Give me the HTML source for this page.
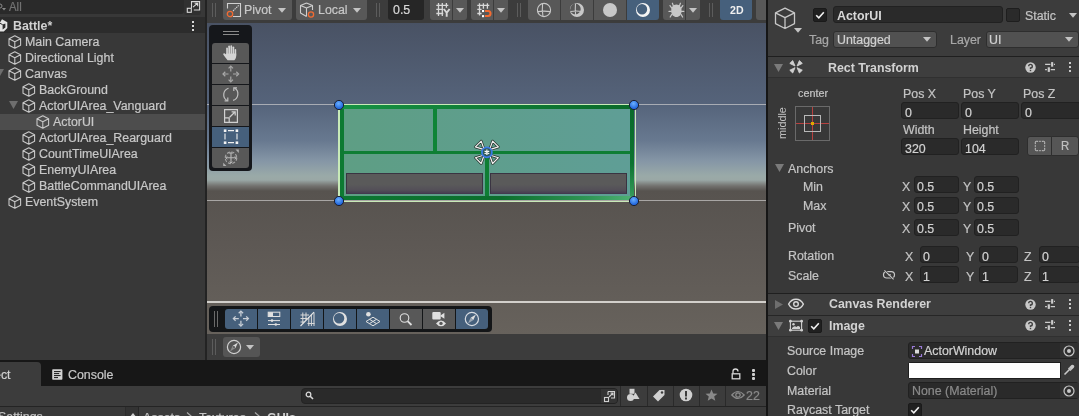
<!DOCTYPE html>
<html><head><meta charset="utf-8">
<style>
*{margin:0;padding:0;box-sizing:border-box}
html,body{width:1079px;height:416px;overflow:hidden;background:#383838}
body{position:relative;font-family:"Liberation Sans",sans-serif;font-size:12.4px;color:#c4c4c4}
.a{position:absolute}
.t{position:absolute;white-space:nowrap;line-height:16px;font-size:12.4px;will-change:transform;transform:scaleY(1.05);transform-origin:0 12.3px;-webkit-text-stroke:0.2px currentColor}
.b{font-weight:bold;-webkit-text-stroke:0}
svg{position:absolute;overflow:visible}
</style></head><body>
<!-- ========== HIERARCHY ========== -->
<div class="a" style="left:0;top:0;width:205px;height:360px;background:#383838"></div>
<div class="a" style="left:0;top:0;width:184px;height:14px;background:#2a2a2a;border-radius:0 0 3px 0"></div>
<div class="a" style="left:184px;top:0;width:17px;height:15px;background:#303030;border-radius:0 0 3px 3px"></div>
<div class="a" style="left:0;top:17px;width:205px;height:16px;background:#2c2c2c"></div>
<div class="a" style="left:0;top:114px;width:205px;height:16px;background:#4d4d4d"></div>

<!-- search row -->
<svg style="left:0px;top:3px" width="8" height="8" viewBox="0 0 8 8"><path d="M2 5h4L4 7.5Z" fill="#8a8a8a"/><circle cx="0" cy="3" r="2" fill="none" stroke="#8a8a8a"/></svg>
<div class="t" style="left:9.2px;top:-1.2px;color:#747474;font-size:11.4px">All</div>
<svg style="left:184px;top:0px" width="18" height="15" viewBox="184 0 18 15"><path d="M191.5 8V1.6H199.6V10H193.8" fill="none" stroke="#d8d8d8" stroke-width="1.1"/><rect x="187.3" y="8.3" width="4" height="4" fill="none" stroke="#d8d8d8" stroke-width="1.1"/><path d="M193 7.2L197.6 3.2 M194.6 3.2H197.7V6.3" fill="none" stroke="#d8d8d8" stroke-width="1.1"/></svg>
<!-- header -->
<svg style="left:0px;top:17px" width="10" height="17" viewBox="0 17 10 17"><path d="M0 22.6L2 19.2L7.3 22.3V28L3.8 31.6H0Z" fill="#e4e4e4"/><path d="M2.6 24.6L5.4 23.6V27.6L2.6 29.4Z" fill="#2c2c2c"/><path d="M2.6 24.6L0 23.3" stroke="#2c2c2c" stroke-width="1"/></svg>
<div class="t b" style="left:12.5px;top:17.7px;color:#d2d2d2">Battle*</div>
<div class="a" style="left:192px;top:21px;width:2px;height:2px;background:#d8d8d8"></div>
<div class="a" style="left:192px;top:25px;width:2px;height:2px;background:#d8d8d8"></div>
<div class="a" style="left:192px;top:29px;width:2px;height:2px;background:#d8d8d8"></div>
<svg style="left:7.6px;top:35.3px" width="14" height="14" viewBox="0 0 14 14"><path d="M6.8 .8L12.6 3.8V10.2L6.8 13.2L1 10.2V3.8Z M1 3.8L6.8 6.8L12.6 3.8 M6.8 6.8V13.2" fill="none" stroke="#c8c8c8" stroke-width="1.1" stroke-linejoin="round"/></svg>
<div class="t" style="left:25.0px;top:33.8px;color:#c8c8c8">Main Camera</div>
<svg style="left:7.6px;top:51.3px" width="14" height="14" viewBox="0 0 14 14"><path d="M6.8 .8L12.6 3.8V10.2L6.8 13.2L1 10.2V3.8Z M1 3.8L6.8 6.8L12.6 3.8 M6.8 6.8V13.2" fill="none" stroke="#c8c8c8" stroke-width="1.1" stroke-linejoin="round"/></svg>
<div class="t" style="left:25.0px;top:49.8px;color:#c8c8c8">Directional Light</div>
<svg style="left:7.6px;top:67.3px" width="14" height="14" viewBox="0 0 14 14"><path d="M6.8 .8L12.6 3.8V10.2L6.8 13.2L1 10.2V3.8Z M1 3.8L6.8 6.8L12.6 3.8 M6.8 6.8V13.2" fill="none" stroke="#c8c8c8" stroke-width="1.1" stroke-linejoin="round"/></svg>
<div class="t" style="left:25.0px;top:65.8px;color:#c8c8c8">Canvas</div>
<svg style="left:-5px;top:69px" width="9" height="8" viewBox="0 0 9 8"><path d="M0 0H9L4.5 8Z" fill="#6e6e6e"/></svg>
<svg style="left:21.6px;top:83.3px" width="14" height="14" viewBox="0 0 14 14"><path d="M6.8 .8L12.6 3.8V10.2L6.8 13.2L1 10.2V3.8Z M1 3.8L6.8 6.8L12.6 3.8 M6.8 6.8V13.2" fill="none" stroke="#c8c8c8" stroke-width="1.1" stroke-linejoin="round"/></svg>
<div class="t" style="left:39.0px;top:81.8px;color:#c8c8c8">BackGround</div>
<svg style="left:21.6px;top:99.3px" width="14" height="14" viewBox="0 0 14 14"><path d="M6.8 .8L12.6 3.8V10.2L6.8 13.2L1 10.2V3.8Z M1 3.8L6.8 6.8L12.6 3.8 M6.8 6.8V13.2" fill="none" stroke="#c8c8c8" stroke-width="1.1" stroke-linejoin="round"/></svg>
<div class="t" style="left:39.0px;top:97.8px;color:#c8c8c8">ActorUIArea_Vanguard</div>
<svg style="left:9px;top:101px" width="9" height="8" viewBox="0 0 9 8"><path d="M0 0H9L4.5 8Z" fill="#6e6e6e"/></svg>
<svg style="left:35.6px;top:115.3px" width="14" height="14" viewBox="0 0 14 14"><path d="M6.8 .8L12.6 3.8V10.2L6.8 13.2L1 10.2V3.8Z M1 3.8L6.8 6.8L12.6 3.8 M6.8 6.8V13.2" fill="none" stroke="#c8c8c8" stroke-width="1.1" stroke-linejoin="round"/></svg>
<div class="t" style="left:53.0px;top:113.8px;color:#c8c8c8">ActorUI</div>
<svg style="left:21.6px;top:131.3px" width="14" height="14" viewBox="0 0 14 14"><path d="M6.8 .8L12.6 3.8V10.2L6.8 13.2L1 10.2V3.8Z M1 3.8L6.8 6.8L12.6 3.8 M6.8 6.8V13.2" fill="none" stroke="#c8c8c8" stroke-width="1.1" stroke-linejoin="round"/></svg>
<div class="t" style="left:39.0px;top:129.8px;color:#c8c8c8">ActorUIArea_Rearguard</div>
<svg style="left:21.6px;top:147.3px" width="14" height="14" viewBox="0 0 14 14"><path d="M6.8 .8L12.6 3.8V10.2L6.8 13.2L1 10.2V3.8Z M1 3.8L6.8 6.8L12.6 3.8 M6.8 6.8V13.2" fill="none" stroke="#c8c8c8" stroke-width="1.1" stroke-linejoin="round"/></svg>
<div class="t" style="left:39.0px;top:145.8px;color:#c8c8c8">CountTimeUIArea</div>
<svg style="left:21.6px;top:163.3px" width="14" height="14" viewBox="0 0 14 14"><path d="M6.8 .8L12.6 3.8V10.2L6.8 13.2L1 10.2V3.8Z M1 3.8L6.8 6.8L12.6 3.8 M6.8 6.8V13.2" fill="none" stroke="#c8c8c8" stroke-width="1.1" stroke-linejoin="round"/></svg>
<div class="t" style="left:39.0px;top:161.8px;color:#c8c8c8">EnemyUIArea</div>
<svg style="left:21.6px;top:179.3px" width="14" height="14" viewBox="0 0 14 14"><path d="M6.8 .8L12.6 3.8V10.2L6.8 13.2L1 10.2V3.8Z M1 3.8L6.8 6.8L12.6 3.8 M6.8 6.8V13.2" fill="none" stroke="#c8c8c8" stroke-width="1.1" stroke-linejoin="round"/></svg>
<div class="t" style="left:39.0px;top:177.8px;color:#c8c8c8">BattleCommandUIArea</div>
<svg style="left:7.6px;top:195.3px" width="14" height="14" viewBox="0 0 14 14"><path d="M6.8 .8L12.6 3.8V10.2L6.8 13.2L1 10.2V3.8Z M1 3.8L6.8 6.8L12.6 3.8 M6.8 6.8V13.2" fill="none" stroke="#c8c8c8" stroke-width="1.1" stroke-linejoin="round"/></svg>
<div class="t" style="left:25.0px;top:193.8px;color:#c8c8c8">EventSystem</div>
<!-- divider -->
<div class="a" style="left:205px;top:0;width:2px;height:360px;background:#232323"></div>

<!-- ========== SCENE TOOLBAR ========== -->
<div class="a" style="left:207px;top:0;width:559px;height:23px;background:#3c3c3c"></div>
<div class="a" style="left:212px;top:3px;width:1px;height:14px;background:#5c5c5c"></div><div class="a" style="left:215px;top:3px;width:1px;height:14px;background:#5c5c5c"></div>
<div class="a" style="left:223px;top:0;width:69px;height:20px;background:#585858;border-radius:0 0 3px 3px"></div>
<svg style="left:226px;top:2px" width="16" height="16" viewBox="0 0 16 16"><path d="M1.5 6.5V1.5H14.5V14.5H7" fill="none" stroke="#d0d0d0" stroke-width="1.1"/><path d="M7 9L13 3" stroke="#d0d0d0" stroke-width="1.1" stroke-dasharray="1.5 .7"/><circle cx="4" cy="12" r="2.7" fill="none" stroke="#f26b32" stroke-width="1.3"/></svg>
<div class="t" style="left:244.2px;top:2.3px;color:#c8c8c8">Pivot</div>
<svg style="left:278px;top:8px" width="8" height="5" viewBox="0 0 8 5"><path d="M0 0H8L4 4.8Z" fill="#c4c4c4"/></svg>
<div class="a" style="left:296px;top:0;width:71px;height:20px;background:#585858;border-radius:0 0 3px 3px"></div>
<svg style="left:299px;top:2px" width="17" height="16" viewBox="0 0 17 16"><path d="M7.5 1L13.5 3.5V8 M7.5 1L1.5 3.5V11L7.5 14.5 M1.5 3.5L7.5 6V14.5 M7.5 6L13.5 3.5" fill="none" stroke="#cfcfcf" stroke-width="1.1" stroke-linejoin="round"/><circle cx="12" cy="12.5" r="2.6" fill="#585858" stroke="#f26b32" stroke-width="1.3"/></svg>
<div class="t" style="left:317.5px;top:2.3px;color:#c8c8c8">Local</div>
<svg style="left:353px;top:8px" width="8" height="5" viewBox="0 0 8 5"><path d="M0 0H8L4 4.8Z" fill="#c4c4c4"/></svg>
<div class="a" style="left:376px;top:3px;width:1px;height:14px;background:#5c5c5c"></div><div class="a" style="left:379px;top:3px;width:1px;height:14px;background:#5c5c5c"></div>
<div class="a" style="left:388px;top:0;width:36px;height:20px;background:#262626;border-radius:0 0 3px 3px"></div>
<div class="t" style="left:393px;top:2px;color:#d8d8d8">0.5</div>
<div class="a" style="left:430px;top:0;width:22px;height:20px;background:#585858;border-radius:0 0 0 3px"></div>
<div class="a" style="left:453px;top:0;width:14px;height:20px;background:#585858;border-radius:0 0 3px 0"></div>
<svg style="left:432px;top:0px" width="24" height="20" viewBox="432 0 24 20"><path d="M438.5 3V16 M442.3 3V16 M446.4 3V7.8 M436.3 5.3H448.3 M436.3 9.4H443.3 M436.3 13.5H443.3" stroke="#d8d8d8" stroke-width="1.3"/><path d="M443.8 9L446.7 12.8L449.6 9 M446.7 12.8V16.8" fill="none" stroke="#d8d8d8" stroke-width="1.9"/></svg>
<svg style="left:456px;top:8px" width="8" height="5" viewBox="0 0 8 5"><path d="M0 0H8L4 4.8Z" fill="#c4c4c4"/></svg>
<div class="a" style="left:471px;top:0;width:22px;height:20px;background:#585858;border-radius:0 0 0 3px"></div>
<div class="a" style="left:494px;top:0;width:14px;height:20px;background:#585858;border-radius:0 0 3px 0"></div>
<svg style="left:472px;top:0px" width="24" height="20" viewBox="472 0 24 20"><path d="M479.5 3.2V15.5 M483.4 3.2V8.8 M487.4 3.2V8.8 M477.3 5.3H489.3 M477.3 9.4H481.6 M477.3 13.5H481.6" stroke="#d8d8d8" stroke-width="1.3"/><rect x="482" y="10" width="2.1" height="2.1" fill="#fff"/><rect x="482" y="15.1" width="2.1" height="2.1" fill="#fff"/><path d="M485 11H488A2.5 2.5 0 0 1 488 16H485" fill="none" stroke="#f26b32" stroke-width="2.1"/></svg>
<svg style="left:497px;top:8px" width="8" height="5" viewBox="0 0 8 5"><path d="M0 0H8L4 4.8Z" fill="#c4c4c4"/></svg>
<div class="a" style="left:517px;top:3px;width:1px;height:14px;background:#5c5c5c"></div><div class="a" style="left:520px;top:3px;width:1px;height:14px;background:#5c5c5c"></div>
<div class="a" style="left:528px;top:0;width:32px;height:20px;background:#585858;border-radius:0 0 0 3px"></div>
<div class="a" style="left:561px;top:0;width:32px;height:20px;background:#585858;border-radius:0"></div>
<div class="a" style="left:594px;top:0;width:32px;height:20px;background:#585858;border-radius:0"></div>
<div class="a" style="left:627px;top:0;width:32px;height:20px;background:#46607c;border-radius:0 0 3px 0"></div>
<svg style="left:536px;top:2px" width="16" height="16" viewBox="0 0 16 16"><circle cx="8" cy="8" r="6.6" fill="none" stroke="#c8c8c8" stroke-width="1.1"/><path d="M1.6 9.6Q8 8.6 14.4 9.6 M6.6 1.5Q5.8 8 7 14.6" fill="none" stroke="#c8c8c8" stroke-width="1.1"/></svg>
<svg style="left:569px;top:2px" width="16" height="16" viewBox="0 0 16 16"><path d="M8 1A7 7 0 1 1 8 15A7 7 0 1 1 8 1Z M6.3 1.6A5.4 5.4 0 1 0 6.3 12.4A5.4 5.4 0 1 0 6.3 1.6Z" fill="#c8c8c8" fill-rule="evenodd"/><path d="M1.5 9.5Q7 8.6 13 9.5 M6.5 1.5Q6 7 6.6 13" fill="none" stroke="#c8c8c8" stroke-width="1.1"/></svg>
<svg style="left:602px;top:2px" width="16" height="16" viewBox="0 0 16 16"><circle cx="8" cy="8" r="7" fill="#c8c8c8"/></svg>
<svg style="left:635px;top:2px" width="16" height="16" viewBox="0 0 16 16"><path d="M8 1A7 7 0 1 1 8 15A7 7 0 1 1 8 1Z M7 2.1A5.2 5.2 0 1 0 7 12.5A5.2 5.2 0 1 0 7 2.1Z" fill="#f4f4f4" fill-rule="evenodd"/></svg>
<div class="a" style="left:663px;top:0;width:22px;height:20px;background:#585858;border-radius:0 0 0 3px"></div>
<div class="a" style="left:686px;top:0;width:14px;height:20px;background:#585858;border-radius:0 0 3px 0"></div>
<svg style="left:664px;top:0px" width="24" height="20" viewBox="664 0 24 20"><path d="M676.4 4.6C679.8 4.6 681.6 7.5 681.6 11C681.6 14.8 679.3 17 676.4 17C673.5 17 671.2 14.8 671.2 11C671.2 7.5 673 4.6 676.4 4.6Z" fill="#c8c8c8"/><path d="M673.4 6L672.4 3.2 M679.4 6L680.4 3.2 M671.8 8.2L670 5.6 M681 8.2L682.8 5.6 M671.2 11.4H669 M681.6 11.4H683.8 M671.6 14.6L670.2 17 M681.2 14.6L682.6 17" stroke="#c8c8c8" stroke-width="1.2" stroke-linecap="round"/></svg>
<svg style="left:689px;top:8px" width="8" height="5" viewBox="0 0 8 5"><path d="M0 0H8L4 4.8Z" fill="#c4c4c4"/></svg>
<div class="a" style="left:709px;top:3px;width:1px;height:14px;background:#5c5c5c"></div><div class="a" style="left:712px;top:3px;width:1px;height:14px;background:#5c5c5c"></div>
<div class="a" style="left:720px;top:0;width:32px;height:20px;background:#46607c;border-radius:0 0 3px 3px"></div>
<div class="t b" style="left:730px;top:2.3px;color:#f0f0f0;font-size:10.6px">2D</div>
<div class="a" style="left:756px;top:0;width:12px;height:20px;background:#585858;border-radius:0 0 0 3px"></div>
<!-- ========== SCENE VIEW ========== -->
<div class="a" style="left:207px;top:23px;width:559px;height:311px;background:linear-gradient(to bottom,#495264 0px,#55637a 80px,#687990 118px,#8596a6 138px,#9aaaa8 153px,#9aa8a6 157px,#72716e 163px,#57534f 168px,#5d5854 220px,#67625c 311px)"></div>
<!-- scene bottom toolbar -->
<div class="a" style="left:207px;top:334px;width:559px;height:26px;background:#3c3c3c"></div>
<div class="a" style="left:766px;top:0;width:2px;height:416px;background:#161616"></div>

<div class="a" style="left:207px;top:104px;width:559px;height:1px;background:#a8acb4"></div>
<div class="a" style="left:207px;top:200px;width:559px;height:1px;background:#a8a6a4"></div>
<div class="a" style="left:207px;top:301px;width:559px;height:2px;background:#d2cfcb"></div>
<div class="a" style="left:209px;top:25px;width:43px;height:146px;background:#15171b;border-radius:4px"></div>
<div class="a" style="left:223px;top:31px;width:16px;height:1px;background:#8a8a8a"></div><div class="a" style="left:223px;top:34px;width:16px;height:1px;background:#8a8a8a"></div>
<div class="a" style="left:212px;top:43px;width:37px;height:20px;background:#585858;border-radius:3px 3px 0 0"></div>
<div class="a" style="left:212px;top:64px;width:37px;height:20px;background:#585858;border-radius:0"></div>
<div class="a" style="left:212px;top:85px;width:37px;height:20px;background:#585858;border-radius:0"></div>
<div class="a" style="left:212px;top:106px;width:37px;height:20px;background:#585858;border-radius:0"></div>
<div class="a" style="left:212px;top:127px;width:37px;height:20px;background:#46607c;border-radius:0"></div>
<div class="a" style="left:212px;top:148px;width:37px;height:20px;background:#585858;border-radius:0 0 3px 3px"></div>
<svg style="left:212px;top:43px" width="37" height="22" viewBox="212 43 37 22"><g fill="#d4d4d4"><rect x="226.2" y="47.6" width="1.7" height="8" rx=".85"/><rect x="228.3" y="45.4" width="1.7" height="9" rx=".85"/><rect x="230.4" y="45.2" width="1.7" height="9" rx=".85"/><rect x="232.5" y="46.4" width="1.7" height="9" rx=".85"/><rect x="234.6" y="49" width="1.6" height="7" rx=".8"/><path d="M226.2 53.5H236.2V56C236.2 58 235.3 59.3 234.3 60.3H227.6C226.4 59 224.8 56.8 223.4 54.8C222.8 53.9 223.6 52.6 224.8 53.4L226.2 54.6Z"/></g></svg>
<svg style="left:212px;top:64px" width="37" height="22" viewBox="212 64 37 22"><path d="M230.8 67V71.5 M230.8 76.5V81 M224 74H228.5 M233 74H237.5" stroke="#a8a8a8" stroke-width="1.2"/><path d="M228.6 68.3L230.8 66L233 68.3 M228.6 79.7L230.8 82L233 79.7 M225.3 71.8L223 74L225.3 76.2 M236.3 71.8L238.6 74L236.3 76.2" fill="none" stroke="#a8a8a8" stroke-width="1.2"/></svg>
<svg style="left:212px;top:85px" width="37" height="22" viewBox="212 85 37 22"><path d="M228.5 88.2A6.8 6.8 0 0 0 227 100.5 M233.1 100.4A6.8 6.8 0 0 0 234.6 88.1" fill="none" stroke="#c0c0c0" stroke-width="1.2"/><path d="M224.6 100.8H227.8V97.6 M237 87.8H233.8V91" fill="none" stroke="#c0c0c0" stroke-width="1.2"/></svg>
<svg style="left:212px;top:106px" width="37" height="22" viewBox="212 106 37 22"><path d="M224.6 109.6H237.4V122.4H224.6Z M224.6 117.8H229.2V122.4" fill="none" stroke="#d0d0d0" stroke-width="1.2"/><path d="M229.6 117.2L235.2 111.8 M231.6 111.8H235.2V115.4" fill="none" stroke="#d0d0d0" stroke-width="1.2"/></svg>
<svg style="left:212px;top:127px" width="37" height="22" viewBox="212 127 37 22"><path d="M226 130.6H236 M226 142.6H236 M225 131.6V141.6 M237 131.6V141.6" stroke="#f0f0f0" stroke-width="1.1" stroke-dasharray="0 2 6 2"/><rect x="223.8" y="129.4" width="2.6" height="2.6" fill="#f4f4f4"/><rect x="235.6" y="129.4" width="2.6" height="2.6" fill="#f4f4f4"/><rect x="223.8" y="141.4" width="2.6" height="2.6" fill="#f4f4f4"/><rect x="235.6" y="141.4" width="2.6" height="2.6" fill="#f4f4f4"/></svg>
<svg style="left:212px;top:148px" width="37" height="22" viewBox="212 148 37 22"><circle cx="231" cy="157.8" r="5.8" fill="none" stroke="#a8a8a8" stroke-width="1.1" stroke-dasharray="3 1.5"/><path d="M231 152.5V163 M225.7 157.8H236.3" stroke="#b8b8b8" stroke-width="1.1"/><path d="M229.5 154L231 152.5L232.5 154 M229.5 161.6L231 163.1L232.5 161.6 M227.2 156.3L225.7 157.8L227.2 159.3 M234.8 156.3L236.3 157.8L234.8 159.3" fill="none" stroke="#b8b8b8" stroke-width="1"/><path d="M223.2 166H226.5L223.2 162.7Z M238.8 149.6H235.5L238.8 152.9Z" fill="#b0b0b0"/></svg>
<div class="a" style="left:338px;top:104px;width:297.5px;height:97.5px;border:1px solid #c8eab8;border-width:1px 1.5px 1.5px 2px"></div>
<div class="a" style="left:340px;top:105px;width:294px;height:4px;background:linear-gradient(90deg,#179344,#0f7d36 50%,#0a6a2a)"></div><div class="a" style="left:340px;top:109px;width:4px;height:91px;background:#0d7a32"></div><div class="a" style="left:630px;top:109px;width:4px;height:91px;background:linear-gradient(180deg,#0a6a2a,#0c7330 60%,#3a9e5e)"></div><div class="a" style="left:344px;top:196px;width:286px;height:4px;background:linear-gradient(90deg,#0c7632,#0b6e2d 55%,#2f9555 85%,#4caf72)"></div><div class="a" style="left:630px;top:196px;width:4px;height:4px;background:#4caf72"></div>
<div class="a" style="left:344px;top:109px;width:286px;height:87px;background:linear-gradient(90deg,#5e9e84,#5f9e96)"></div>
<div class="a" style="left:433px;top:109px;width:4px;height:42px;background:#0e8436"></div>
<div class="a" style="left:344px;top:150.5px;width:286px;height:3.5px;background:#0e7e34"></div>
<div class="a" style="left:485px;top:152px;width:3.5px;height:44px;background:#0e7e34"></div>
<div class="a" style="left:346px;top:173px;width:137px;height:21px;background:linear-gradient(180deg,#5a5a5a 55%,#534f58 85%,#473f52);border:1px solid #3a3442;border-bottom-color:#43394f"></div>
<div class="a" style="left:490px;top:173px;width:137px;height:21px;background:linear-gradient(180deg,#5a5a5a 55%,#534f58 85%,#473f52);border:1px solid #3a3442;border-bottom-color:#43394f"></div>
<svg style="left:333px;top:98.5px" width="12" height="12" viewBox="0 0 12 12"><defs><radialGradient id="hg" cx=".45" cy=".35" r=".6"><stop offset="0" stop-color="#6ab0ff"/><stop offset="1" stop-color="#1a5ed8"/></radialGradient></defs><circle cx="6" cy="6" r="4.6" fill="url(#hg)" stroke="#1a2030" stroke-width="1"/></svg>
<svg style="left:628px;top:98.5px" width="12" height="12" viewBox="0 0 12 12"><defs><radialGradient id="hg" cx=".45" cy=".35" r=".6"><stop offset="0" stop-color="#6ab0ff"/><stop offset="1" stop-color="#1a5ed8"/></radialGradient></defs><circle cx="6" cy="6" r="4.6" fill="url(#hg)" stroke="#1a2030" stroke-width="1"/></svg>
<svg style="left:333px;top:195px" width="12" height="12" viewBox="0 0 12 12"><defs><radialGradient id="hg" cx=".45" cy=".35" r=".6"><stop offset="0" stop-color="#6ab0ff"/><stop offset="1" stop-color="#1a5ed8"/></radialGradient></defs><circle cx="6" cy="6" r="4.6" fill="url(#hg)" stroke="#1a2030" stroke-width="1"/></svg>
<svg style="left:628px;top:195px" width="12" height="12" viewBox="0 0 12 12"><defs><radialGradient id="hg" cx=".45" cy=".35" r=".6"><stop offset="0" stop-color="#6ab0ff"/><stop offset="1" stop-color="#1a5ed8"/></radialGradient></defs><circle cx="6" cy="6" r="4.6" fill="url(#hg)" stroke="#1a2030" stroke-width="1"/></svg>
<svg style="left:470px;top:135px" width="34" height="34" viewBox="470 135 34 34"><path d="M481.2 141.1L475.4 146.9L484.2 149.6Z M492.6 141.1L498.4 146.9L489.6 149.6Z M475.4 157.7L481.2 163.5L484.2 155Z M498.4 157.7L492.6 163.5L489.6 155Z" fill="none" stroke="#26302a" stroke-width="2.6" stroke-linejoin="round"/><path d="M481.2 141.1L475.4 146.9L484.2 149.6Z M492.6 141.1L498.4 146.9L489.6 149.6Z M475.4 157.7L481.2 163.5L484.2 155Z M498.4 157.7L492.6 163.5L489.6 155Z" fill="none" stroke="#f4f4f4" stroke-width="1.2" stroke-linejoin="round"/><circle cx="486.9" cy="152.3" r="5" fill="#2f5a5a" stroke="#3b7be6" stroke-width="1.8"/><path d="M486.9 149.6V155 M484.6 150.9L489.2 153.7 M484.6 153.7L489.2 150.9" stroke="#ffffff" stroke-width="1.2"/></svg>
<div class="a" style="left:209px;top:306px;width:283px;height:26px;background:#141618;border-radius:4px"></div>
<div class="a" style="left:214px;top:311px;width:1px;height:16px;background:#6a6a6a"></div><div class="a" style="left:217px;top:311px;width:1px;height:16px;background:#6a6a6a"></div>
<div class="a" style="left:225px;top:309px;width:32px;height:20px;background:#46607c;border-radius:3px 0 0 3px"></div>
<div class="a" style="left:258px;top:309px;width:32px;height:20px;background:#46607c;border-radius:0"></div>
<div class="a" style="left:291px;top:309px;width:32px;height:20px;background:#46607c;border-radius:0"></div>
<div class="a" style="left:324px;top:309px;width:32px;height:20px;background:#46607c;border-radius:0"></div>
<div class="a" style="left:357px;top:309px;width:32px;height:20px;background:#46607c;border-radius:0"></div>
<div class="a" style="left:390px;top:309px;width:32px;height:20px;background:#585858;border-radius:0"></div>
<div class="a" style="left:423px;top:309px;width:32px;height:20px;background:#585858;border-radius:0"></div>
<div class="a" style="left:456px;top:309px;width:32px;height:20px;background:#46607c;border-radius:0 3px 3px 0"></div>
<svg style="left:225px;top:306px" width="270" height="26" viewBox="225 306 270 26"><path d="M240.9 311.5V316.5 M240.9 320.7V325.7 M233.8 318.6H238.8 M243 318.6H248" stroke="#c8ced6" stroke-width="1.3"/><path d="M238.7 313.3L240.9 311.1L243.1 313.3 M238.7 323.9L240.9 326.1L243.1 323.9 M235.6 316.4L233.4 318.6L235.6 320.8 M246.2 316.4L248.4 318.6L246.2 320.8" fill="none" stroke="#c8ced6" stroke-width="1.3"/><rect x="268.2" y="312.2" width="11.6" height="4.3" fill="none" stroke="#e0e0e0" stroke-width="1"/><rect x="268.2" y="312.2" width="4.8" height="4.3" fill="#e0e0e0"/><path d="M268 320.6H280 M268 324.5H280" stroke="#e0e0e0" stroke-width="1"/><circle cx="272" cy="320.6" r="1.3" fill="#e0e0e0"/><circle cx="275.8" cy="324.5" r="1.3" fill="#e0e0e0"/><path d="M302.8 312.5V323 M306 312.5V320 M300.5 315H309 M300.5 318.5H307 M300.5 322H304 M308.8 317V326 M311.4 314.5V326 M314 312.5V326 M307.5 323.5H314.5" stroke="#d8d8d8" stroke-width="1"/><path d="M300.5 326L314 312.2" stroke="#e8e8e8" stroke-width="1.1"/><path d="M340 312A7 7 0 1 1 340 326A7 7 0 1 1 340 312Z M339.1 313.1A5.2 5.2 0 1 0 339.1 323.5A5.2 5.2 0 1 0 339.1 313.1Z" fill="#e0e0e0" fill-rule="evenodd"/><circle cx="368.4" cy="314.3" r="2.3" fill="#e0e0e0"/><path d="M373 317.2L380 321.5L373 325.8L366 321.5Z M369.5 319.3L376.5 323.6 M376.5 319.3L369.5 323.6" fill="none" stroke="#e0e0e0" stroke-width="1"/><circle cx="404.5" cy="318" r="4.3" fill="none" stroke="#e0e0e0" stroke-width="1.1"/><path d="M407.6 321.2L411.5 325" stroke="#e0e0e0" stroke-width="1.8"/><rect x="432.3" y="312" width="8.4" height="7.5" rx="1" fill="#e0e0e0"/><path d="M440.5 315.5L444.4 312.8V318.8L440.5 316.2Z" fill="#e0e0e0"/><path d="M436 323.4Q441 317.5 446 323.4Q441 329.3 436 323.4Z" fill="#e0e0e0"/><circle cx="441" cy="323.4" r="1.7" fill="#585858"/><circle cx="471.9" cy="319" r="6.6" fill="none" stroke="#d8dce2" stroke-width="1.2"/><path d="M475.9 314.6L473.2 320.2L470.7 317.8Z" fill="#e0e0e0"/><path d="M467.9 323.4L470.6 317.8L473.1 320.2Z" fill="#9aa6b4"/></svg>







<div class="a" style="left:212px;top:339px;width:1px;height:16px;background:#5c5c5c"></div><div class="a" style="left:215px;top:339px;width:1px;height:16px;background:#5c5c5c"></div>
<div class="a" style="left:223px;top:337px;width:37px;height:20px;background:#555555;border-radius:3px"></div>
<svg style="left:226px;top:339px" width="16" height="16" viewBox="0 0 16 16"><circle cx="8" cy="8" r="6.6" fill="none" stroke="#d0d0d0" stroke-width="1.2"/><path d="M12 3.6L9.3 9.2L6.8 6.8Z" fill="#d8d8d8"/><path d="M4 12.4L6.7 6.8L9.2 9.2Z" fill="#8a8a8a"/><circle cx="8" cy="8" r=".9" fill="#545454"/></svg>
<svg style="left:246px;top:345px" width="8" height="5" viewBox="0 0 8 5"><path d="M0 0H8L4 4.8Z" fill="#c4c4c4"/></svg>
<!-- ========== BOTTOM (Project) ========== -->
<div class="a" style="left:0;top:360px;width:766px;height:26px;background:#171717"></div>
<div class="a" style="left:0;top:362px;width:41px;height:24px;background:#3c3c3c;border-radius:0 4px 0 0"></div>
<div class="a" style="left:0;top:386px;width:766px;height:20px;background:#3c3c3c"></div>
<div class="a" style="left:0;top:405.5px;width:766px;height:1.5px;background:#242424"></div>
<div class="a" style="left:0;top:407px;width:766px;height:9px;background:#3b3b3b"></div>

<div class="t" style="left:-5.6px;top:366.5px;color:#d2d2d2">ect</div>
<svg style="left:52px;top:369px" width="11" height="11" viewBox="0 0 11 11"><rect x=".2" y=".2" width="10.2" height="10.6" rx=".8" fill="#d4d4d4"/><path d="M2 2.6H8.6 M2 4.6H7.2 M2 6.6H8.6 M2 8.6H6" stroke="#171717" stroke-width="1"/></svg>
<div class="t" style="left:67.5px;top:366.5px;color:#c8c8c8">Console</div>
<svg style="left:731px;top:368px" width="10" height="12" viewBox="0 0 10 12"><path d="M2 5.5V3.5A2.5 2.5 0 0 1 7 3.5" fill="none" stroke="#d8d8d8" stroke-width="1.3"/><rect x="1.2" y="5.8" width="7.6" height="5" fill="none" stroke="#d8d8d8" stroke-width="1.3"/></svg>
<div class="a" style="left:752px;top:369.0px;width:2.5px;height:2.5px;background:#d0d0d0;border-radius:1px"></div>
<div class="a" style="left:752px;top:373.2px;width:2.5px;height:2.5px;background:#d0d0d0;border-radius:1px"></div>
<div class="a" style="left:752px;top:377.4px;width:2.5px;height:2.5px;background:#d0d0d0;border-radius:1px"></div>
<div class="a" style="left:301px;top:388px;width:317px;height:16px;background:#2a2a2a;border:1px solid #232323;border-radius:4px"></div>
<div class="a" style="left:601px;top:389px;width:16px;height:14px;background:#343434;border-radius:0 3px 3px 0"></div>
<svg style="left:305px;top:391px" width="9" height="9" viewBox="0 0 9 9"><circle cx="3.5" cy="3.5" r="2.3" fill="none" stroke="#d8d8d8" stroke-width="1.3"/><path d="M5.2 5.2L8 8" stroke="#d8d8d8" stroke-width="1.6"/></svg>
<svg style="left:603px;top:390px" width="13" height="13" viewBox="0 0 13 13"><path d="M5 1.5H11.5V8H8 M5 1.5V5" fill="none" stroke="#d0d0d0" stroke-width="1.1"/><rect x="1.5" y="7.5" width="4" height="4" fill="none" stroke="#d0d0d0" stroke-width="1.1"/><path d="M6 7L10 3 M7.5 3H10V5.5" fill="none" stroke="#d0d0d0" stroke-width="1.1"/></svg>
<div class="a" style="left:620px;top:386px;width:1px;height:20px;background:#2a2a2a"></div>
<div class="a" style="left:646.5px;top:386px;width:1px;height:20px;background:#2a2a2a"></div>
<div class="a" style="left:672.5px;top:386px;width:1px;height:20px;background:#2a2a2a"></div>
<div class="a" style="left:698.5px;top:386px;width:1px;height:20px;background:#2a2a2a"></div>
<div class="a" style="left:725px;top:386px;width:1px;height:20px;background:#2a2a2a"></div>
<svg style="left:626px;top:388px" width="14" height="14" viewBox="0 0 14 14"><rect x="3.5" y=".8" width="5" height="5" fill="#d0d0d0"/><path d="M9.5 4.5L13.5 11H5.5Z" fill="#d0d0d0"/><circle cx="4.5" cy="9.5" r="3.5" fill="#d0d0d0"/></svg>
<svg style="left:652px;top:389px" width="14" height="13" viewBox="0 0 14 13"><path d="M1 7.5L7.5 1H12.5V6L6 12.5Z" fill="#d0d0d0"/><circle cx="10" cy="3.5" r="1.2" fill="#3c3c3c"/></svg>
<svg style="left:679px;top:388px" width="14" height="14" viewBox="0 0 14 14"><circle cx="7" cy="7" r="6.3" fill="#d0d0d0"/><rect x="6" y="3" width="2" height="5.5" fill="#3c3c3c"/><rect x="6" y="9.5" width="2" height="2" fill="#3c3c3c"/></svg>
<svg style="left:705px;top:389px" width="13" height="13" viewBox="0 0 13 13"><path d="M6.5 .5L8.2 4.5L12.5 4.8L9.2 7.6L10.3 11.8L6.5 9.5L2.7 11.8L3.8 7.6L.5 4.8L4.8 4.5Z" fill="#8a8a8a"/></svg>
<svg style="left:731px;top:390px" width="14" height="10" viewBox="0 0 14 10"><path d="M.8 5Q7 -2 13.2 5Q7 12 .8 5Z" fill="none" stroke="#8a8a8a" stroke-width="1.2"/><circle cx="7" cy="5" r="2.2" fill="none" stroke="#8a8a8a" stroke-width="1.2"/></svg>
<div class="t" style="left:746px;top:388px;color:#8a8a8a">22</div>
<div class="a" style="left:0;top:407px;width:125px;height:9px;background:#393939"></div>
<div class="a" style="left:125px;top:407px;width:13px;height:9px;background:#333333;border-left:1px solid #2c2c2c"></div>
<div class="a" style="left:138px;top:407px;width:1px;height:9px;background:#262626"></div>
<svg style="left:128.5px;top:412.8px" width="8" height="6" viewBox="0 0 8 6"><path d="M0 5H8L4 0Z" fill="#d0d0d0"/></svg>
<div class="t" style="left:-2px;top:408.5px;color:#c4c4c4">Settings</div>
<div class="t" style="left:143px;top:409.5px;color:#c4c4c4">Assets</div><svg style="left:186px;top:412px" width="6" height="8" viewBox="0 0 6 8"><path d="M1 .5L5 4L1 7.5" fill="none" stroke="#a8a8a8" stroke-width="1.2"/></svg><div class="t" style="left:199.4px;top:409.5px;color:#c4c4c4">Textures</div><svg style="left:254px;top:412px" width="6" height="8" viewBox="0 0 6 8"><path d="M1 .5L5 4L1 7.5" fill="none" stroke="#a8a8a8" stroke-width="1.2"/></svg><div class="t b" style="left:267px;top:409.5px;color:#d0d0d0">GUIs</div>
<!-- ========== INSPECTOR ========== -->
<div class="a" style="left:768px;top:0;width:311px;height:416px;background:#383838"></div>
<div class="a" style="left:768px;top:0;width:311px;height:56px;background:#3c3c3c"></div>
<div class="a" style="left:768px;top:56px;width:311px;height:1px;background:#1f1f1f"></div>
<div class="a" style="left:768px;top:57px;width:311px;height:20px;background:#3e3e3e"></div>
<div class="a" style="left:768px;top:77px;width:311px;height:1px;background:#303030"></div>
<svg style="left:774px;top:7px" width="22" height="23" viewBox="0 0 22 23"><path d="M11 1.2L20.5 5.8V16.6L11 21.5L1.5 16.6V5.8Z M1.5 5.8L11 10.6L20.5 5.8 M11 10.6V21.5" fill="none" stroke="#c8c8c8" stroke-width="1.3" stroke-linejoin="round"/></svg>
<svg style="left:794px;top:28px" width="8" height="5" viewBox="0 0 8 5"><path d="M0 0H8L4 4.8Z" fill="#c4c4c4"/></svg>
<div class="a" style="left:813px;top:8px;width:14px;height:14px;background:#202020;border:1px solid #1a1a1a;border-radius:2px"></div>
<svg style="left:813px;top:8px" width="14" height="14" viewBox="0 0 14 14"><path d="M3.2 7.2L5.8 9.8L10.8 4.2" fill="none" stroke="#f0f0f0" stroke-width="1.6"/></svg>
<div class="a" style="left:833px;top:6px;width:170px;height:17px;background:#2a2a2a;border:1px solid #212121;border-radius:3px"></div>
<div class="t b" style="left:836.5px;top:8.3px;color:#d8d8d8;">ActorUI</div>
<div class="a" style="left:1006px;top:8px;width:14px;height:14px;background:#2a2a2a;border:1px solid #1e1e1e;border-radius:2px"></div>
<div class="t" style="left:1024.5px;top:8.1px;color:#c4c4c4;">Static</div>
<svg style="left:1069px;top:13px" width="8" height="5" viewBox="0 0 8 5"><path d="M0 0H8L4 4.8Z" fill="#c4c4c4"/></svg>
<div class="t" style="left:809px;top:32.1px;color:#a8a8a8;">Tag</div>
<div class="a" style="left:832.5px;top:30.5px;width:104px;height:17px;background:#515151;border:1px solid #2e2e2e;border-radius:3px"></div>
<div class="t" style="left:836.5px;top:32.1px;color:#d0d0d0;">Untagged</div>
<svg style="left:923px;top:37px" width="8" height="5" viewBox="0 0 8 5"><path d="M0 0H8L4 4.8Z" fill="#c4c4c4"/></svg>
<div class="t" style="left:950.3px;top:32.1px;color:#a8a8a8;">Layer</div>
<div class="a" style="left:985.5px;top:30.5px;width:93px;height:17px;background:#515151;border:1px solid #2e2e2e;border-radius:3px"></div>
<div class="t" style="left:989px;top:32.1px;color:#d0d0d0;">UI</div>
<svg style="left:1065px;top:37px" width="8" height="5" viewBox="0 0 8 5"><path d="M0 0H8L4 4.8Z" fill="#c4c4c4"/></svg>
<svg style="left:774px;top:64px" width="9" height="8" viewBox="0 0 9 8"><path d="M0 0H9L4.5 8Z" fill="#7a7a7a"/></svg>
<svg style="left:786px;top:58px" width="20" height="18" viewBox="786 58 20 18"><path d="M789.8 63.4L792.7 60.6L795 66Z M802.3 63.4L799.4 60.6L797.1 66Z M789.8 70.2L792.7 73L795 67.7Z M802.3 70.2L799.4 73L797.1 67.7Z" fill="#d0d0d0" stroke="#d0d0d0" stroke-width=".9" stroke-linejoin="round"/></svg>
<div class="t b" style="left:828px;top:59.6px;color:#d2d2d2;">Rect Transform</div>
<svg style="left:1025px;top:62px" width="11" height="11" viewBox="0 0 11 11"><circle cx="5.5" cy="5.5" r="5.2" fill="#c8c8c8"/><path d="M3.7 4.2A1.8 1.8 0 1 1 5.5 6V7" fill="none" stroke="#3e3e3e" stroke-width="1.4"/><rect x="4.8" y="7.8" width="1.4" height="1.4" fill="#3e3e3e"/></svg>
<svg style="left:1044px;top:62.0px" width="12" height="11" viewBox="0 0 12 11"><path d="M1.1 2.4H6.4 M9.9 2.4H11 M1.1 7.6H2.9 M6.7 7.6H11" stroke="#cccccc" stroke-width="1.2"/><rect x="7.1" y=".1" width="2.1" height="4.6" fill="#cccccc"/><rect x="3.7" y="5.3" width="2.2" height="4.6" fill="#cccccc"/></svg>
<div class="a" style="left:1069px;top:62px;width:2px;height:2px;background:#c8c8c8"></div>
<div class="a" style="left:1069px;top:66px;width:2px;height:2px;background:#c8c8c8"></div>
<div class="a" style="left:1069px;top:70px;width:2px;height:2px;background:#c8c8c8"></div>
<div class="t" style="left:797.7px;top:84.9px;color:#c4c4c4;font-size:10.8px;">center</div>
<div class="a" style="left:767px;top:115.5px;width:30px;height:16px;transform:rotate(-90deg);transform-origin:center;white-space:nowrap;font-size:10.8px;line-height:16px;color:#c4c4c4;text-align:center;will-change:transform">middle</div>
<div class="a" style="left:795px;top:106px;width:35px;height:35px;border:1px solid #6a6a6a"></div>
<div class="a" style="left:812px;top:107px;width:1px;height:33px;background:#b8413f"></div>
<div class="a" style="left:796px;top:123px;width:33px;height:1px;background:#b8413f"></div>
<div class="a" style="left:804px;top:115px;width:17px;height:17px;border:1.5px solid #b8b8b8"></div>
<div class="a" style="left:811px;top:122px;width:3px;height:3px;background:#e0a800"></div>
<div class="t" style="left:902.7px;top:86.3px;color:#c4c4c4;">Pos X</div>
<div class="t" style="left:962.7px;top:86.3px;color:#c4c4c4;">Pos Y</div>
<div class="t" style="left:1022.5px;top:86.3px;color:#c4c4c4;">Pos Z</div>
<div class="a" style="left:901px;top:102px;width:58px;height:17px;background:#2a2a2a;border:1px solid #212121;border-radius:3px"></div>
<div class="a" style="left:961px;top:102px;width:58px;height:17px;background:#2a2a2a;border:1px solid #212121;border-radius:3px"></div>
<div class="a" style="left:1021px;top:102px;width:60px;height:17px;background:#2a2a2a;border:1px solid #212121;border-radius:3px"></div>
<div class="t" style="left:904.6px;top:104.8px;color:#d2d2d2;">0</div>
<div class="t" style="left:964.6px;top:104.8px;color:#d2d2d2;">0</div>
<div class="t" style="left:1024.6px;top:104.8px;color:#d2d2d2;">0</div>
<div class="t" style="left:902.7px;top:122.1px;color:#c4c4c4;">Width</div>
<div class="t" style="left:962.7px;top:122.1px;color:#c4c4c4;">Height</div>
<div class="a" style="left:901px;top:138px;width:58px;height:17px;background:#2a2a2a;border:1px solid #212121;border-radius:3px"></div>
<div class="a" style="left:961px;top:138px;width:58px;height:17px;background:#2a2a2a;border:1px solid #212121;border-radius:3px"></div>
<div class="t" style="left:904.6px;top:140.6px;color:#d2d2d2;">320</div>
<div class="t" style="left:964.6px;top:140.6px;color:#d2d2d2;">104</div>
<div class="a" style="left:1027px;top:136px;width:25px;height:20px;background:#565656;border:1px solid #2e2e2e;border-radius:3px 0 0 3px"></div>
<div class="a" style="left:1051px;top:136px;width:28px;height:20px;background:#565656;border:1px solid #2e2e2e;border-radius:0 3px 3px 0"></div>
<svg style="left:1034px;top:140px" width="12" height="12" viewBox="0 0 12 12"><path d="M1.3 4.2V2.2Q1.3 1.3 2.2 1.3H4.2 M7.8 1.3H9.8Q10.7 1.3 10.7 2.2V4.2 M10.7 7.8V9.8Q10.7 10.7 9.8 10.7H7.8 M4.2 10.7H2.2Q1.3 10.7 1.3 9.8V7.8 M5.2 1.3H6.8 M5.2 10.7H6.8 M1.3 5.2V6.8 M10.7 5.2V6.8" fill="none" stroke="#c4c4c4" stroke-width="1"/></svg>
<div class="t" style="left:1061.2px;top:138.2px;color:#c0c0c0;font-size:11.4px;">R</div>
<svg style="left:775px;top:164px" width="9" height="8" viewBox="0 0 9 8"><path d="M0 0H9L4.5 8Z" fill="#7a7a7a"/></svg>
<div class="t" style="left:787.7px;top:160.6px;color:#c4c4c4;">Anchors</div>
<div class="t" style="left:803px;top:178.6px;color:#c4c4c4;">Min</div>
<div class="t" style="left:803px;top:197.6px;color:#c4c4c4;">Max</div>
<div class="t" style="left:787.7px;top:220.4px;color:#c4c4c4;">Pivot</div>
<div class="t" style="left:902px;top:178.6px;color:#c4c4c4;">X</div>
<div class="a" style="left:913.5px;top:176px;width:45px;height:17px;background:#2a2a2a;border:1px solid #212121;border-radius:3px"></div>
<div class="t" style="left:916.5px;top:178.6px;color:#d2d2d2;">0.5</div>
<div class="t" style="left:962.8px;top:178.6px;color:#c4c4c4;">Y</div>
<div class="a" style="left:973.5px;top:176px;width:45px;height:17px;background:#2a2a2a;border:1px solid #212121;border-radius:3px"></div>
<div class="t" style="left:976.5px;top:178.6px;color:#d2d2d2;">0.5</div>
<div class="t" style="left:902px;top:199.1px;color:#c4c4c4;">X</div>
<div class="a" style="left:913.5px;top:196.5px;width:45px;height:17px;background:#2a2a2a;border:1px solid #212121;border-radius:3px"></div>
<div class="t" style="left:916.5px;top:199.1px;color:#d2d2d2;">0.5</div>
<div class="t" style="left:962.8px;top:199.1px;color:#c4c4c4;">Y</div>
<div class="a" style="left:973.5px;top:196.5px;width:45px;height:17px;background:#2a2a2a;border:1px solid #212121;border-radius:3px"></div>
<div class="t" style="left:976.5px;top:199.1px;color:#d2d2d2;">0.5</div>
<div class="t" style="left:902px;top:221.1px;color:#c4c4c4;">X</div>
<div class="a" style="left:913.5px;top:218.5px;width:45px;height:17px;background:#2a2a2a;border:1px solid #212121;border-radius:3px"></div>
<div class="t" style="left:916.5px;top:221.1px;color:#d2d2d2;">0.5</div>
<div class="t" style="left:962.8px;top:221.1px;color:#c4c4c4;">Y</div>
<div class="a" style="left:973.5px;top:218.5px;width:45px;height:17px;background:#2a2a2a;border:1px solid #212121;border-radius:3px"></div>
<div class="t" style="left:976.5px;top:221.1px;color:#d2d2d2;">0.5</div>
<div class="t" style="left:787.7px;top:248.1px;color:#c4c4c4;">Rotation</div>
<div class="t" style="left:787.7px;top:268.0px;color:#c4c4c4;">Scale</div>
<div class="t" style="left:905px;top:248.6px;color:#c4c4c4;">X</div>
<div class="a" style="left:919.5px;top:246px;width:39px;height:17px;background:#2a2a2a;border:1px solid #212121;border-radius:3px"></div>
<div class="t" style="left:922.5px;top:248.6px;color:#d2d2d2;">0</div>
<div class="t" style="left:965.7px;top:248.6px;color:#c4c4c4;">Y</div>
<div class="a" style="left:979.2px;top:246px;width:39.3px;height:17px;background:#2a2a2a;border:1px solid #212121;border-radius:3px"></div>
<div class="t" style="left:982.2px;top:248.6px;color:#d2d2d2;">0</div>
<div class="t" style="left:1024px;top:248.6px;color:#c4c4c4;">Z</div>
<div class="a" style="left:1039.2px;top:246px;width:41px;height:17px;background:#2a2a2a;border:1px solid #212121;border-radius:3px"></div>
<div class="t" style="left:1042.2px;top:248.6px;color:#d2d2d2;">0</div>
<div class="t" style="left:905px;top:268.6px;color:#c4c4c4;">X</div>
<div class="a" style="left:919.5px;top:266px;width:39px;height:17px;background:#2a2a2a;border:1px solid #212121;border-radius:3px"></div>
<div class="t" style="left:922.5px;top:268.6px;color:#d2d2d2;">1</div>
<div class="t" style="left:965.7px;top:268.6px;color:#c4c4c4;">Y</div>
<div class="a" style="left:979.2px;top:266px;width:39.3px;height:17px;background:#2a2a2a;border:1px solid #212121;border-radius:3px"></div>
<div class="t" style="left:982.2px;top:268.6px;color:#d2d2d2;">1</div>
<div class="t" style="left:1024px;top:268.6px;color:#c4c4c4;">Z</div>
<div class="a" style="left:1039.2px;top:266px;width:41px;height:17px;background:#2a2a2a;border:1px solid #212121;border-radius:3px"></div>
<div class="t" style="left:1042.2px;top:268.6px;color:#d2d2d2;">1</div>
<svg style="left:880px;top:268px" width="18" height="14" viewBox="880 268 18 14"><rect x="883.5" y="271.6" width="11" height="6.4" rx="3.2" fill="none" stroke="#c8c8c8" stroke-width="1.2"/><path d="M884.4 270.3L893.6 279.4" stroke="#383838" stroke-width="2.2"/><path d="M884.4 270.3L893.6 279.4" stroke="#c8c8c8" stroke-width="1.1"/><path d="M888 274.8H891" stroke="#c8c8c8" stroke-width=".9"/></svg>
<div class="a" style="left:768px;top:293px;width:311px;height:1px;background:#1f1f1f"></div>
<div class="a" style="left:768px;top:294px;width:311px;height:21px;background:#3e3e3e"></div>
<div class="a" style="left:768px;top:315px;width:311px;height:1px;background:#262626"></div>
<svg style="left:775px;top:300px" width="9" height="9" viewBox="0 0 9 9"><path d="M0 0L8 4.5L0 9Z" fill="#6e6e6e"/></svg>
<svg style="left:786px;top:296px" width="20" height="16" viewBox="786 296 20 16"><path d="M788.6 304.1C792 297.6 800 297.6 803.4 304.1C800 310.6 792 310.6 788.6 304.1Z" fill="none" stroke="#d8d8d8" stroke-width="1.3"/><circle cx="796" cy="304.1" r="2.3" fill="none" stroke="#d8d8d8" stroke-width="1.4"/></svg>
<div class="t b" style="left:828.5px;top:295.9px;color:#d2d2d2;">Canvas Renderer</div>
<svg style="left:1025px;top:299px" width="11" height="11" viewBox="0 0 11 11"><circle cx="5.5" cy="5.5" r="5.2" fill="#c8c8c8"/><path d="M3.7 4.2A1.8 1.8 0 1 1 5.5 6V7" fill="none" stroke="#3e3e3e" stroke-width="1.4"/><rect x="4.8" y="7.8" width="1.4" height="1.4" fill="#3e3e3e"/></svg>
<svg style="left:1044px;top:299.0px" width="12" height="11" viewBox="0 0 12 11"><path d="M1.1 2.4H6.4 M9.9 2.4H11 M1.1 7.6H2.9 M6.7 7.6H11" stroke="#cccccc" stroke-width="1.2"/><rect x="7.1" y=".1" width="2.1" height="4.6" fill="#cccccc"/><rect x="3.7" y="5.3" width="2.2" height="4.6" fill="#cccccc"/></svg>
<div class="a" style="left:1069px;top:298.6px;width:2px;height:2px;background:#c8c8c8"></div>
<div class="a" style="left:1069px;top:303px;width:2px;height:2px;background:#c8c8c8"></div>
<div class="a" style="left:1069px;top:307.4px;width:2px;height:2px;background:#c8c8c8"></div>
<div class="a" style="left:768px;top:316px;width:311px;height:20px;background:#3e3e3e"></div>
<div class="a" style="left:768px;top:336px;width:311px;height:1px;background:#303030"></div>
<svg style="left:774px;top:322px" width="9" height="8" viewBox="0 0 9 8"><path d="M0 0H9L4.5 8Z" fill="#7a7a7a"/></svg>
<svg style="left:786px;top:318px" width="20" height="16" viewBox="786 318 20 16"><rect x="790.4" y="321.2" width="11.2" height="9" fill="none" stroke="#d0d0d0" stroke-width="1.1"/><circle cx="790.4" cy="321.2" r="1.4" fill="#d0d0d0"/><circle cx="801.6" cy="321.2" r="1.4" fill="#d0d0d0"/><circle cx="790.4" cy="330.2" r="1.4" fill="#d0d0d0"/><circle cx="801.6" cy="330.2" r="1.4" fill="#d0d0d0"/><circle cx="793.5" cy="324.3" r="1.2" fill="#d0d0d0"/><path d="M792 329V328Q794.5 325 796.5 327Q798 325 800 327V329Z" fill="#d0d0d0"/></svg>
<div class="a" style="left:808px;top:319px;width:14px;height:14px;background:#202020;border:1px solid #1a1a1a;border-radius:2px"></div>
<svg style="left:808px;top:319px" width="14" height="14" viewBox="0 0 14 14"><path d="M3.2 7.2L5.8 9.8L10.8 4.2" fill="none" stroke="#f0f0f0" stroke-width="1.6"/></svg>
<div class="t b" style="left:828.5px;top:317.6px;color:#d2d2d2;">Image</div>
<svg style="left:1025px;top:320px" width="11" height="11" viewBox="0 0 11 11"><circle cx="5.5" cy="5.5" r="5.2" fill="#c8c8c8"/><path d="M3.7 4.2A1.8 1.8 0 1 1 5.5 6V7" fill="none" stroke="#3e3e3e" stroke-width="1.4"/><rect x="4.8" y="7.8" width="1.4" height="1.4" fill="#3e3e3e"/></svg>
<svg style="left:1044px;top:320.0px" width="12" height="11" viewBox="0 0 12 11"><path d="M1.1 2.4H6.4 M9.9 2.4H11 M1.1 7.6H2.9 M6.7 7.6H11" stroke="#cccccc" stroke-width="1.2"/><rect x="7.1" y=".1" width="2.1" height="4.6" fill="#cccccc"/><rect x="3.7" y="5.3" width="2.2" height="4.6" fill="#cccccc"/></svg>
<div class="a" style="left:1069px;top:320px;width:2px;height:2px;background:#c8c8c8"></div>
<div class="a" style="left:1069px;top:324.4px;width:2px;height:2px;background:#c8c8c8"></div>
<div class="a" style="left:1069px;top:328.8px;width:2px;height:2px;background:#c8c8c8"></div>
<div class="t" style="left:787.3px;top:343.0px;color:#c4c4c4;">Source Image</div>
<div class="t" style="left:787.3px;top:363.0px;color:#c4c4c4;">Color</div>
<div class="t" style="left:787.3px;top:382.6px;color:#c4c4c4;">Material</div>
<div class="t" style="left:787.3px;top:402.3px;color:#c4c4c4;">Raycast Target</div>
<div class="a" style="left:908px;top:341.5px;width:171px;height:17px;background:#2a2a2a;border:1px solid #212121;border-radius:3px"></div>
<div class="a" style="left:1060px;top:342.5px;width:19px;height:15px;background:#303030"></div>
<svg style="left:912px;top:345.5px" width="10" height="11" viewBox="0 0 10 11"><path d="M.5 3V.5H3 M7 .5H9.5V3 M.5 8V10.5H3 M7 10.5H9.5V8" fill="none" stroke="#9a7ad8" stroke-width="1.2"/><rect x="3" y="3.5" width="4" height="4" fill="#d8d8d8"/></svg>
<div class="t" style="left:924.3px;top:343.1px;color:#d2d2d2;">ActorWindow</div>
<svg style="left:1063px;top:344.5px" width="12" height="12" viewBox="0 0 12 12"><circle cx="6" cy="6" r="5" fill="none" stroke="#c8c8c8" stroke-width="1.2"/><circle cx="6" cy="6" r="2" fill="#c8c8c8"/></svg>
<div class="a" style="left:908px;top:361.5px;width:153px;height:17px;background:#1e1e1e;border-radius:3px 0 0 3px"></div>
<div class="a" style="left:909px;top:362.5px;width:151px;height:15px;background:#ffffff"></div>
<svg style="left:1063px;top:364px" width="12" height="12" viewBox="0 0 12 12"><path d="M1.5 10.5L7 5" stroke="#c8c8c8" stroke-width="1.6"/><path d="M6 3.5L8.5 1A1.8 1.8 0 0 1 11 3.5L8.5 6Z" fill="#c8c8c8"/><path d="M5.5 4L8 6.5" stroke="#c8c8c8" stroke-width="1.5"/></svg>
<div class="a" style="left:908px;top:381.5px;width:171px;height:17px;background:#2a2a2a;border:1px solid #212121;border-radius:3px"></div>
<div class="a" style="left:1060px;top:382.5px;width:19px;height:15px;background:#303030"></div>
<div class="t" style="left:911.5px;top:382.9px;color:#8a8a8a;">None (Material)</div>
<svg style="left:1063px;top:384.5px" width="12" height="12" viewBox="0 0 12 12"><circle cx="6" cy="6" r="5" fill="none" stroke="#c8c8c8" stroke-width="1.2"/><circle cx="6" cy="6" r="2" fill="#c8c8c8"/></svg>
<div class="a" style="left:908px;top:402.5px;width:14px;height:14px;background:#202020;border:1px solid #1a1a1a;border-radius:2px"></div>
<svg style="left:908px;top:402.5px" width="14" height="14" viewBox="0 0 14 14"><path d="M3.2 7.2L5.8 9.8L10.8 4.2" fill="none" stroke="#f0f0f0" stroke-width="1.6"/></svg>
</body></html>
